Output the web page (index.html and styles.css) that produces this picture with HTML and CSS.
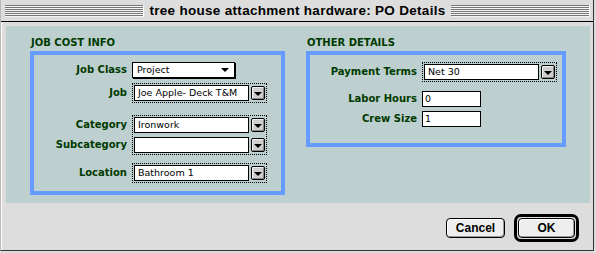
FILE: index.html
```html
<!DOCTYPE html>
<html lang="en">
<head>
  <meta charset="UTF-8" />
  <title>PO Details</title>
  <link rel="stylesheet" href="styles.css">
</head>
<body>
  <div class="window">
    <div class="titlebar">
      <div class="stripes"></div>
      <div class="title">tree house attachment hardware: PO Details</div>
      <div class="stripes"></div>
    </div>

    <div class="content">
      <div class="panel">
        <section class="group group-job">
          <h2 class="group-title">JOB COST INFO</h2>
          <div class="box">
            <div class="row row-class">
              <div class="label">Job Class</div>
              <div class="popup">Project<span class="popup-arrow"></span></div>
            </div>

            <div class="row row-job">
              <div class="label">Job</div>
              <div class="combo-group">
                <div class="combo">
                  <div class="field">Joe Apple- Deck T&amp;M</div>
                  <span class="drop-btn"></span>
                </div>
              </div>
            </div>

            <div class="row row-category">
              <div class="labels">
                <div class="label">Category</div>
                <div class="label">Subcategory</div>
              </div>
              <div class="combo-group">
                <div class="combo">
                  <div class="field">Ironwork</div>
                  <span class="drop-btn"></span>
                </div>
                <div class="combo">
                  <div class="field"></div>
                  <span class="drop-btn"></span>
                </div>
              </div>
            </div>

            <div class="row row-location">
              <div class="label">Location</div>
              <div class="combo-group">
                <div class="combo">
                  <div class="field">Bathroom 1</div>
                  <span class="drop-btn"></span>
                </div>
              </div>
            </div>
          </div>
        </section>

        <section class="group group-other">
          <h2 class="group-title">OTHER DETAILS</h2>
          <div class="box">
            <div class="row row-terms">
              <div class="label">Payment Terms</div>
              <div class="combo-group">
                <div class="combo">
                  <div class="field">Net 30</div>
                  <span class="drop-btn"></span>
                </div>
              </div>
            </div>

            <div class="row row-hours">
              <div class="label">Labor Hours</div>
              <div class="field field-short">0</div>
            </div>

            <div class="row row-crew">
              <div class="label">Crew Size</div>
              <div class="field field-short">1</div>
            </div>
          </div>
        </section>
      </div>

      <div class="footer">
        <button class="btn">Cancel</button>
        <div class="default-ring"><button class="btn">OK</button></div>
      </div>
    </div>
  </div>
</body>
</html>
```

FILE: styles.css
```css
html, body {
  margin: 0; padding: 0;
  background: #dddddd;
  width: 596px;
  height: 253px;
  overflow: hidden;
}
body {
  font-family: "DejaVu Sans", Verdana, sans-serif;
  font-size: 10px;
  color: #000;
}
.window {
  width: 594px;
  height: 251px;
  border-left: 1px solid #b8b8b8;
  border-right: 1px solid #333;
  border-bottom: 1px solid #333;
  box-sizing: border-box;
  background: #dddddd;
  display: flex;
  flex-direction: column;
}

/* title bar */
.titlebar {
  height: 22px;
  box-sizing: border-box;
  border-bottom: 1px solid #000;
  display: flex;
  align-items: center;
  padding: 0 3px 0 4px;
}
.stripes {
  flex: 1;
  height: 12px;
  background: repeating-linear-gradient(#777 0 1px, #f4f4f4 1px 2px);
  border-right: 1px solid #fff;
}
.title {
  padding: 0 5px;
  font-family: "Liberation Sans", Arial, sans-serif;
  font-weight: bold;
  font-size: 13.5px;
  letter-spacing: 0.3px;
  line-height: 16px;
  white-space: nowrap;
}

/* body */
.content {
  flex: 1;
  border-left: 1px solid #fff;
  padding: 4px 3px 0 4px;
  display: flex;
  flex-direction: column;
}
.panel {
  background: #bdcfce;
  height: 177px;
  box-sizing: border-box;
  padding: 10px 24px 0 24px;
  display: flex;
  gap: 21px;
}
.group-job { width: 255px; }
.group-other { width: 260px; }
.group-title {
  margin: 0 0 2px;
  padding-left: 1px;
  font-size: 10px;
  line-height: 13px;
  font-weight: bold;
  color: #003a00;
}
.box {
  border: 4px solid #669cff;
  padding: 7px 0 0;
}
.group-job .box { height: 144px; box-sizing: border-box; }
.group-other .box { height: 96px; box-sizing: border-box; }

.row {
  display: flex;
  align-items: center;
  gap: 5px;
}
.row-job { margin-top: 5px; }
.row-category { margin-top: 12px; align-items: flex-start; }
.row-location { margin-top: 8px; }
.row-hours { margin-top: 9px; }
.row-crew { margin-top: 4px; }

.label {
  width: 93px;
  text-align: right;
  font-weight: bold;
  color: #003a00;
  line-height: 16px;
  white-space: nowrap;
}
.group-other .label { width: 107px; }
.labels {
  display: flex;
  flex-direction: column;
  gap: 4px;
  padding-top: 2px;
}

/* controls */
.field {
  background: #fff;
  border: 1px solid #000;
  height: 16px;
  box-sizing: border-box;
  padding: 0 3px;
  font-size: 9.5px;
  line-height: 14px;
  white-space: nowrap;
  overflow: hidden;
}
.field-short { width: 59px; padding-left: 2px; }
.combo-group {
  border: 1px dotted #000;
  padding: 1px;
  display: flex;
  flex-direction: column;
  gap: 4px;
}
.combo {
  display: flex;
  align-items: center;
  gap: 2px;
}
.combo .field { width: 115px; }
.drop-btn {
  width: 14px;
  height: 14px;
  box-sizing: border-box;
  border: 1px solid #000;
  border-radius: 2px;
  background: #cfcfcf;
  box-shadow: inset 1px 1px #f2f2f2, inset -1px -1px #888;
  display: flex;
  align-items: center;
  justify-content: center;
}
.drop-btn::after {
  content: "";
  border-left: 4px solid transparent;
  border-right: 4px solid transparent;
  border-top: 4px solid #000;
  margin-top: 1px;
}
.popup {
  width: 103px;
  height: 16px;
  box-sizing: border-box;
  background: #fff;
  border: 1px solid #000;
  box-shadow: 1px 1px #000;
  padding: 0 4px;
  font-size: 9.5px;
  line-height: 14px;
  display: flex;
  align-items: center;
  justify-content: space-between;
}
.popup-arrow {
  border-left: 4px solid transparent;
  border-right: 4px solid transparent;
  border-top: 4px solid #000;
  margin-right: 1px;
}

/* buttons */
.footer {
  flex: 1;
  display: flex;
  justify-content: flex-end;
  align-items: center;
  gap: 9px;
  padding-right: 11px;
  padding-top: 2px;
}
.btn {
  width: 59px;
  height: 20px;
  box-sizing: border-box;
  border: 1px solid #000;
  border-radius: 4px;
  background: #eeeeee;
  box-shadow: inset 1px 1px #fff, inset -1px -1px #999;
  font-family: "Liberation Sans", Arial, sans-serif;
  font-weight: bold;
  font-size: 12px;
  padding: 0;
  color: #000;
}
.default-ring {
  border: 3px solid #000;
  border-radius: 7px;
  padding: 1px;
  display: flex;
  background: #dddddd;
}
.default-ring .btn { width: 57px; }
```
